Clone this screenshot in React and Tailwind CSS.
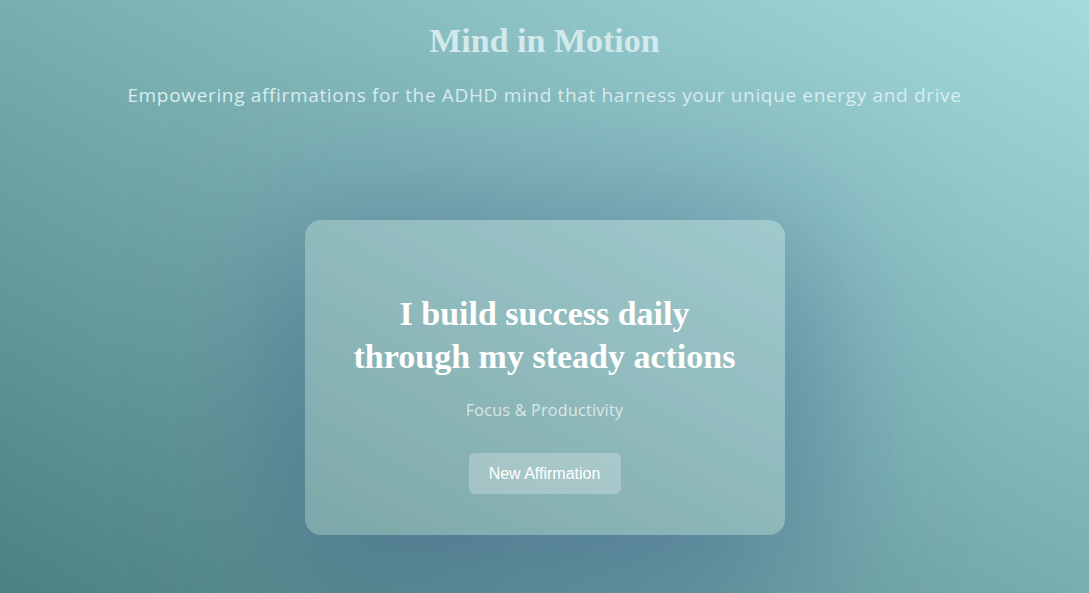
export default function App() {
  return (
    <div className="w-full h-[593px] overflow-hidden flex flex-col items-center bg-[linear-gradient(to_top_right,#4c8181_0%,#79aeb1_50%,#a4d9dd_100%)]">
      <h1 className="mt-[20px] text-[34px] leading-[42px] font-bold text-[#d3e9eb] font-['Liberation_Serif',serif]">
        Mind in Motion
      </h1>
      <p className="mt-[19px] text-[19px] leading-[28px] text-[#d9eeef] tracking-[0.66px] font-['Open_Sans','Noto_Sans',sans-serif]">
        Empowering affirmations for the ADHD mind that harness your unique energy and drive
      </p>
      <div className="mt-[111px] w-[480px] h-[315px] rounded-[16px] bg-white/20 shadow-[0_25px_150px_10px_rgba(55,80,135,0.5)] flex flex-col items-center pt-[72px]">
        <h2 className="text-[34px] leading-[43px] font-bold text-white text-center w-[400px] font-['Liberation_Serif',serif]">
          I build success daily through my steady actions
        </h2>
        <p className="mt-[20px] text-[16px] leading-[24px] text-white/70 tracking-[0.3px] font-['Open_Sans','Noto_Sans',sans-serif]">
          Focus &amp; Productivity
        </p>
        <button className="mt-[31px] w-[152px] h-[41px] rounded-[6px] bg-white/25 text-white text-[16px] font-['Liberation_Sans',Arial,sans-serif]">
          New Affirmation
        </button>
      </div>
    </div>
  );
}
